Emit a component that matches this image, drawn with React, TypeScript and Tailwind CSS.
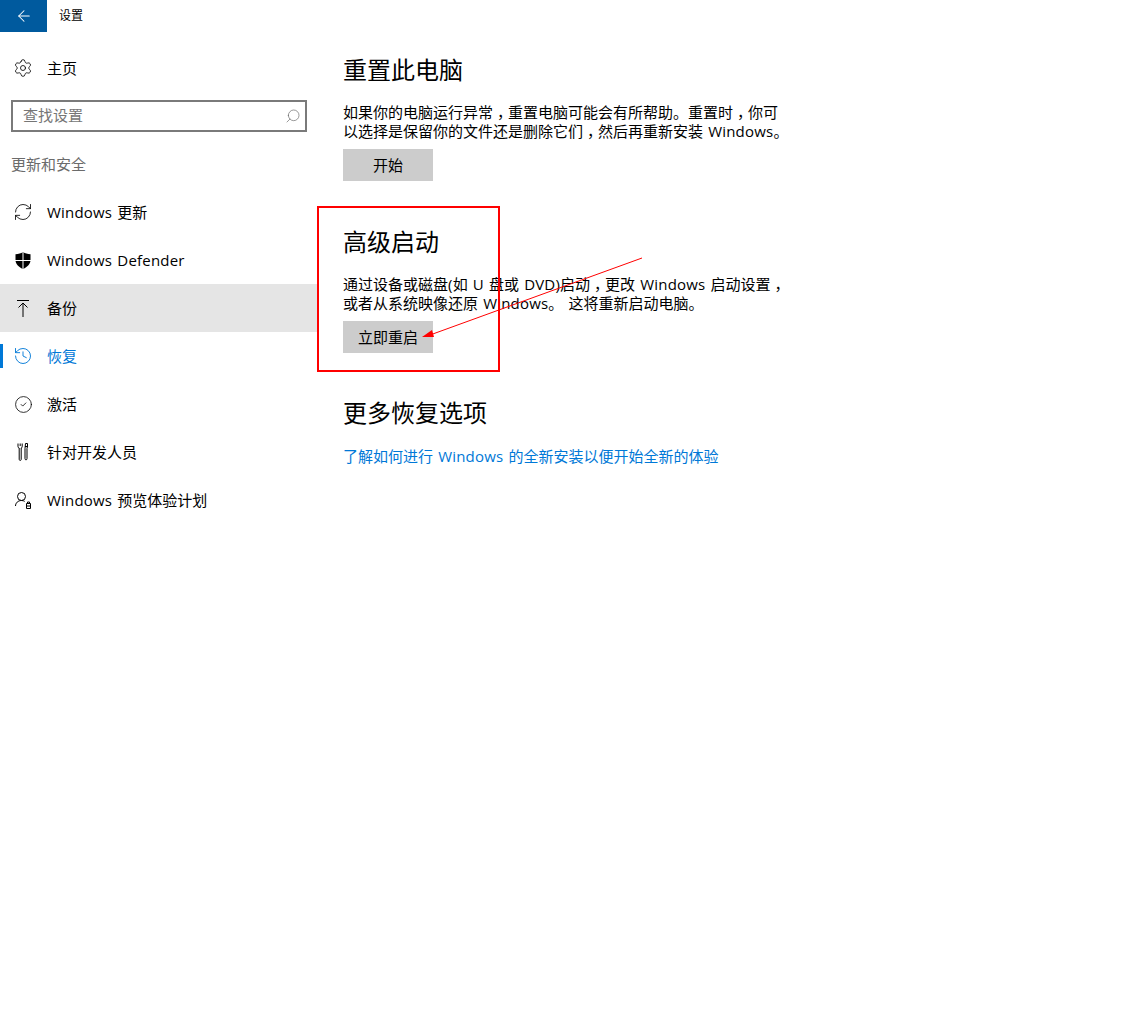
import { ArrowLeft, Settings, Search, RefreshCw, History, CircleCheck } from "lucide-react";

const FONT = "[font-family:'Open_Sans','Noto_Sans_CJK_SC',sans-serif]";

// latin runs run a little wide in the original, and its commas sit mid-cell
const T = ({ children }: { children: string }) => (
  <>
    {children.split(/([A-Za-z().]+(?: [A-Za-z().]+)*|\s|，)/).map((part, i) =>
      part === "，" ? (
        <span key={i} className="pr-[3.5px] pl-[4px] [font-feature-settings:'halt']">
          {part}
        </span>
      ) : /[A-Za-z() ]/.test(part) ? (
        <span key={i} className="tracking-[0.2px] [word-spacing:1px]">
          {part}
        </span>
      ) : (
        part
      ),
    )}
  </>
);

const navItems = [
  { label: "Windows 更新", icon: <RefreshCw size={20} strokeWidth={1} /> },
  {
    label: "Windows Defender",
    icon: (
      <svg width="16" height="17" viewBox="0 0 16 17" fill="currentColor">
        <path d="M8 0c2 1.400 4.500 2.200 7.500 2.200v5.800c0 4-3 7-7.500 9-4.500-2-7.500-5-7.500-9V2.200C3.500 2.200 6 1.400 8 0z" />
        <path d="M7.500 0h1v17h-1zM0 8h16v1H0z" fill="#fff" />
      </svg>
    ),
  },
  {
    label: "备份",
    active: "bg",
    icon: (
      <svg width="12" height="17" viewBox="0 0 12 17" fill="none" stroke="currentColor">
        <path d="M0 .5h12M6 17V3M1.500 7.500 6 3l4.500 4.500" />
      </svg>
    ),
  },
  { label: "恢复", active: "blue", icon: <History size={20} strokeWidth={1.100} /> },
  { label: "激活", icon: <CircleCheck size={19} strokeWidth={1} /> },
  {
    label: "针对开发人员",
    icon: (
      <svg width="12" height="18" viewBox="0 0 12 18" fill="none" stroke="currentColor">
        <path d="M1 .5v3c0 1 .6 1.500 1.200 1.500V16c0 1 .4 1.500 1 1.500s1-.5 1-1.500V5c.6 0 1-.5 1-1.500v-3M3.200 .5v2.500" />
        <path d="M8 3.500h3M8.500 .5h2v3l-.5 2v10c0 .7-.4 1.500-1 1.500s-1-.8-1-1.500V5.500z" />
      </svg>
    ),
  },
  {
    label: "Windows 预览体验计划",
    icon: (
      <svg width="17" height="17" viewBox="0 0 17 17" fill="none" stroke="currentColor">
        <circle cx="6.500" cy="4.500" r="4" />
        <path d="M.5 14c0-3 2.500-5.500 6-5.500 1.200 0 2.300.3 3.200.9" />
        <path d="M11.500 11.500h4v5h-4zM12.500 11.500v-1.500h2v1.500M11.500 14h4" />
      </svg>
    ),
  },
];

const Section = ({ title, children }: { title: string; children: React.ReactNode }) => (
  <section className="w-[448px]">
    <h2 className="text-2xl leading-[32px] text-black">{title}</h2>
    {children}
  </section>
);

export default function App() {
  return (
    <div className={`relative flex h-[1029px] w-[1148px] overflow-hidden bg-white text-black ${FONT}`}>
      <aside className="w-[318px] shrink-0">
        <div className="flex h-8 items-center">
          <div className="flex h-8 w-[47px] items-center justify-center bg-[#005a9e] text-white">
            <ArrowLeft size={18} strokeWidth={1.400} />
          </div>
          <span className="ml-3 text-xs">设置</span>
        </div>
        <div className="mt-3 flex h-12 items-center">
          <span className="flex w-[46px] justify-center">
            <Settings size={20} strokeWidth={1} />
          </span>
          <span className="ml-px text-[15px]">主页</span>
        </div>
        <div className="mt-2 ml-[11px] flex h-8 w-[296px] items-center justify-between border-2 border-[#7a7a7a] pr-[4px] pl-[10px]">
          <span className="-mt-0.5 text-[15px] text-[#767676]">查找设置</span>
          <Search size={16} strokeWidth={1} className="-scale-x-100 text-[#666]" />
        </div>
        <div className="mt-[21px] ml-[11px] h-[22px] text-[15px] leading-[22px] text-[#6b6b6b]">更新和安全</div>
        <nav className="mt-[13px]">
          {navItems.map((item) => (
            <div
              key={item.label}
              className={`relative flex h-12 items-center ${item.active === "bg" ? "bg-[#e5e5e5]" : ""} ${
                item.active === "blue" ? "text-[#0078d7]" : ""
              }`}
            >
              {item.active === "blue" && <span className="absolute top-3 left-0 h-6 w-[3px] bg-[#0078d7]" />}
              <span className="flex w-[46px] justify-center">{item.icon}</span>
              <span className="ml-px text-[15px]">
                <T>{item.label}</T>
              </span>
            </div>
          ))}
        </nav>
      </aside>

      <main className="pt-[54px] pl-[25px] text-[15px] leading-[19px]">
        <Section title="重置此电脑">
          <p className="mt-[17px]">
            <T>如果你的电脑运行异常，重置电脑可能会有所帮助。重置时，你可以选择是保留你的文件还是删除它们，然后再重新安装 Windows。</T>
          </p>
          <button className="mt-[8px] flex h-8 w-[90px] items-center justify-center bg-[#cccccc]">开始</button>
        </Section>
        <div className="mt-[45px]">
          <Section title="高级启动">
            <p className="mt-[17px]">
              <T>通过设备或磁盘(如 U 盘或 DVD)启动，更改 Windows 启动设置，或者从系统映像还原 Windows。 这将重新启动电脑。</T>
            </p>
            <button className="mt-[8px] flex h-8 w-[90px] items-center justify-center bg-[#cccccc]">立即重启</button>
          </Section>
        </div>
        <div className="mt-[44px]">
          <Section title="更多恢复选项">
            <a className="mt-[18px] block text-[#0078d7]">
              <T>了解如何进行 Windows 的全新安装以便开始全新的体验</T>
            </a>
          </Section>
        </div>
      </main>

      {/* red annotation drawn over the page */}
      <div className="pointer-events-none absolute top-[206px] left-[317px] h-[166px] w-[183px] border-2 border-[#ff0000]" />
      <svg className="pointer-events-none absolute top-0 left-0" width="1148" height="1029" fill="none">
        <path d="M642 258 430 335" stroke="#ff0000" />
        <path d="M422 337 432 330 434 337z" fill="#ff0000" />
      </svg>
    </div>
  );
}
